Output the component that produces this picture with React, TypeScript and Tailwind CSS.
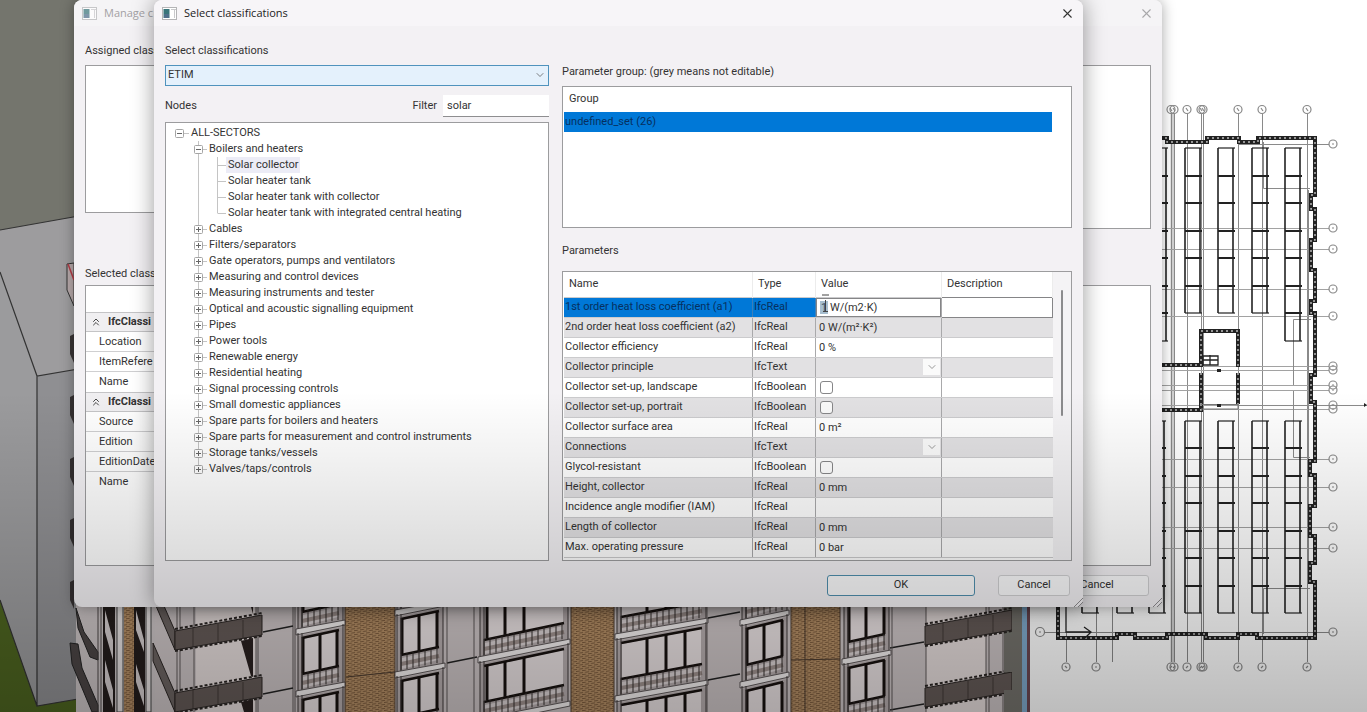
import React, { useState } from 'react';
import { ChevronDown, ChevronsUp, X } from 'lucide-react';

interface TreeNode {
  label: string;
  children?: string[];
}

interface Parameter {
  name: string;
  type: 'IfcReal' | 'IfcText' | 'IfcBoolean';
  value?: string;
}

const nodes: TreeNode[] = [
  {
    label: 'Boilers and heaters',
    children: [
      'Solar collector',
      'Solar heater tank',
      'Solar heater tank with collector',
      'Solar heater tank with integrated central heating'
    ]
  },
  { label: 'Cables' },
  { label: 'Filters/separators' },
  { label: 'Gate operators, pumps and ventilators' },
  { label: 'Measuring and control devices' },
  { label: 'Measuring instruments and tester' },
  { label: 'Optical and acoustic signalling equipment' },
  { label: 'Pipes' },
  { label: 'Power tools' },
  { label: 'Renewable energy' },
  { label: 'Residential heating' },
  { label: 'Signal processing controls' },
  { label: 'Small domestic appliances' },
  { label: 'Spare parts for boilers and heaters' },
  { label: 'Spare parts for measurement and control instruments' },
  { label: 'Storage tanks/vessels' },
  { label: 'Valves/taps/controls' }
];

const parameters: Parameter[] = [
  { name: '1st order heat loss coefficient (a1)', type: 'IfcReal', value: '1 W/(m2·K)' },
  { name: '2nd order heat loss coefficient (a2)', type: 'IfcReal', value: '0 W/(m²·K²)' },
  { name: 'Collector efficiency', type: 'IfcReal', value: '0 %' },
  { name: 'Collector principle', type: 'IfcText' },
  { name: 'Collector set-up, landscape', type: 'IfcBoolean' },
  { name: 'Collector set-up, portrait', type: 'IfcBoolean' },
  { name: 'Collector surface area', type: 'IfcReal', value: '0 m²' },
  { name: 'Connections', type: 'IfcText' },
  { name: 'Glycol-resistant', type: 'IfcBoolean' },
  { name: 'Height, collector', type: 'IfcReal', value: '0 mm' },
  { name: 'Incidence angle modifier (IAM)', type: 'IfcReal', value: '' },
  { name: 'Length of collector', type: 'IfcReal', value: '0 mm' },
  { name: 'Max. operating pressure', type: 'IfcReal', value: '0 bar' }
];

const propertyGroups = [
  { title: 'IfcClassi', rows: ['Location', 'ItemRefere', 'Name'] },
  { title: 'IfcClassi', rows: ['Source', 'Edition', 'EditionDate', 'Name'] }
];

// Floor plan geometry
const rackColumns = [1185, 1218, 1252, 1285];
const upperTicks = [148, 176, 203, 231, 258, 286, 313];
const lowerTicks = [421, 448, 476, 503, 531, 558, 586, 613];
const axesX = [1171, 1174, 1187, 1201, 1203, 1238, 1262, 1307];
const axesY = [228, 249, 289, 316, 366, 370, 385, 390, 405, 409, 459, 487, 527, 548];
const outerWall =
  'M1160 138H1167V142H1207V138H1239V142H1258V138H1315V195H1311V209H1315V240H1311V270H1315V301H1311V313H1315V375H1311V402H1315V461H1310V475H1315V506H1310V536H1315V563H1310V582H1315V638H1257V634H1238V638H1206V634H1167V638H1135V634H1117V638H1058V600';
const coreWalls = 'M1160 365H1201V331H1238V367M1201 373V404M1238 373V404M1160 410H1201V404';

function Wall({ d }: { d: string }) {
  return (
    <g fill="none">
      <path d={d} stroke="#222" strokeWidth="4" />
      <path d={d} stroke="#bdbdbd" strokeWidth="1.4" strokeDasharray="2 3" />
    </g>
  );
}

function Rack({ x, ticks }: { x: number; ticks: number[] }) {
  const top = ticks[0];
  const bottom = ticks[ticks.length - 1];
  return (
    <g stroke="#222" fill="none">
      <path d={`M${x} ${top}V${bottom}M${x + 15} ${top}V${bottom}`} strokeWidth="1.6" />
      {ticks.map((y) => (
        <path key={y} d={`M${x} ${y}H${x + 17}`} strokeWidth={y === top || y === bottom ? 1.2 : 2} />
      ))}
    </g>
  );
}

function FloorPlan() {
  return (
    <g>
      <rect x="1030" width="337" height="712" fill="#fff" />
      <path d="M1172.500 114V662" stroke="#d2d2d2" strokeWidth="4" />
      <g stroke="#8a8a8a" strokeWidth="1" fill="none">
        {axesX.map((x) => (
          <path key={x} d={`M${x}.5 114V662`} />
        ))}
        {axesY.map((y) => (
          <path key={y} d={`M1160 ${y}.5H1329`} stroke="#a2a2a2" />
        ))}
        <path d="M1239 144.5H1329M1044 632.5H1329M1066.5 632V662M1096.5 607V662M1112.5 607V662M1238 405.500H1367" />
        <path d="M1263.500 142V188.500H1310M1311 319.500H1293.500V385M1293.500 391V457.500H1310M1263.500 634V588.500H1310M1308.500 190V580" />
      </g>
      <g stroke="#888" strokeWidth="1.2" fill="none">
        {axesX.map((x) => (
          <g key={x}>
            <circle cx={x} cy="109.500" r="4" />
            <circle cx={x} cy="667" r="4" />
            <path d={`M${x - 1} 108l2 3M${x - 1} 668l2-2`} />
          </g>
        ))}
        {[144, ...axesY, 632].map((y) => (
          <g key={y}>
            <circle cx="1333" cy={y} r="4" />
            <path d={`M1332 ${y}h2`} />
          </g>
        ))}
        <circle cx="1040" cy="632" r="4.500" />
        <circle cx="1066" cy="667" r="4" />
        <circle cx="1096" cy="667" r="4" />
        <path d="M1039 632h2M1065 666l2 2M1095 667h2" />
      </g>
      <Rack x={1151} ticks={[...upperTicks, 341]} />
      <Rack x={1149} ticks={lowerTicks} />
      {rackColumns.map((x) => (
        <g key={x}>
          <Rack x={x} ticks={x === 1285 ? [...upperTicks, 341] : upperTicks} />
          <Rack x={x} ticks={lowerTicks} />
        </g>
      ))}
      <Rack x={1082} ticks={[586, 613]} />
      <Rack x={1117} ticks={[586, 613]} />
      <Wall d={outerWall} />
      <Wall d={coreWalls} />
      <path d="M1203 356H1218V365H1203ZM1203 360H1218M1210 355V365M1066 606V632H1090M1084 627L1091 632L1085 638" fill="none" stroke="#222" strokeWidth="1.3" />
      <path d="M1201 404.500H1238V409H1201" fill="none" stroke="#777" />
      <path d="M1217 369h4v3h-4zM1217 404h4v3h-4zM1364 403l3 2-3 2z" fill="#222" />
    </g>
  );
}

interface BayProps {
  x: number;
  y: number;
  w: number;
  slope: number;
  bars: number[];
  glass?: number;
}

// One storey of a window bay, drawn from the floor slab under it upwards
function Bay({ x, y, w, slope, bars, glass = 36 }: BayProps) {
  const r = y - slope;
  const posts = Array.from({ length: Math.floor(w / 6) }, (_, i) => i * 6 + 4);
  return (
    <g>
      <path d={`M${x} ${y - 55}L${x + w} ${r - 55}V${r}L${x} ${y}Z`} fill="#b5acad" />
      <path d={`M${x + 5} ${y - 52}L${x + w - 5} ${r - 51}V${r - 16}L${x + 5} ${y - 16}Z`} fill="#e8e0e1" />
      <path d={`M${x + 5} ${y - 14}L${x + w - 5} ${r - 13}V${r - 3}L${x + 5} ${y - 3}Z`} fill="#d9d1d2" />
      {bars.map((b) => (
        <path key={b} d={`M${x + b} ${y - 53 - (slope * b) / w}v${glass}`} stroke="#17110f" strokeWidth="3" />
      ))}
      <path d={`M${x + 4} ${y - 53}L${x + w - 4} ${r - 52}M${x + 4} ${y - 17}L${x + w - 4} ${r - 16}`} stroke="#17110f" strokeWidth="2.500" />
      <path d={`M${x + 4} ${y - 8}L${x + w - 4} ${r - 7}`} stroke="#65534c" strokeWidth="4" opacity=".5" />
      {posts.map((p) => (
        <path key={p} d={`M${x + p} ${y - 17 - (slope * p) / w}v16`} stroke="#332c2b" />
      ))}
      <path d={`M${x} ${y - 58}V${y}M${x + w} ${r - 58}V${r}M${x + 4} ${y - 58}V${y}`} stroke="#3c3637" />
      <path d={`M${x - 2} ${y}L${x + w + 2} ${r}v5L${x - 2} ${y + 6}Z`} fill="#f2eeee" stroke="#3c3637" strokeWidth=".8" />
    </g>
  );
}

function Balcony({ x, y, flip }: { x: number; y: number; flip?: boolean }) {
  return (
    <g stroke="#2a2523" strokeWidth="1">
      {!flip && <path d={`M${x - 22} ${y - 50}L${x} ${y}V${y + 19}L${x - 22} ${y - 32}Z`} fill="#6b6361" />}
      <path d={`M${x} ${y}l87-16v20l-87 15z`} fill="#645a57" />
      <path d={`M${x + 18} ${y - 3}v19M${x + 43} ${y - 7}v19M${x + 68} ${y - 11}v19`} opacity=".6" />
      <path d={`M${x} ${y - 2}l87-16M${x} ${y + 20}l87-15`} strokeWidth="2" strokeDasharray="3 2" />
    </g>
  );
}

function Building() {
  return (
    <g>
      <rect width="1030" height="712" fill="#74756d" />
      <path d="M0 230L90 214V712H0Z" fill="#9d9c9e" />
      <path d="M0 272L37 376V706L0 600Z" fill="#9b9b9d" />
      <path d="M37 376L90 367V712H37Z" fill="#8f8f92" />
      <path d="M0 600L37 706L90 697V712H0Z" fill="#4d6420" />
      <path d="M0 230L90 214M0 272L37 376L90 367M37 376V706L78 699M0 600L37 706" fill="none" stroke="#333" strokeWidth="1.200" />
      <path d="M74 263L67 264V290L74 306Z" fill="#b7a9aa" stroke="#333" />
      <path d="M68 264L74 280" stroke="#b33a45" strokeWidth="1.500" />
      {[336, 397, 459, 520, 582].map((y) => (
        <path key={y} d={`M74 ${y - 2}L70 ${y}V${y + 18}L74 ${y + 27}Z`} fill="#3a3536" />
      ))}

      {/* Narrow side elevation */}
      <path d="M76 600H160V712H76Z" fill="#c9c2c3" />
      <path d="M103 600H115V712H103ZM134 600H145V712H134Z" fill="#241d1c" />
      <path d="M105 610L113 640V660L105 632ZM105 660L113 690V708L105 682ZM136 610L144 640V652L136 630ZM136 664L144 690V706L136 682Z" fill="#d2cbcc" />
      <path d="M124 600H134V712H124Z" fill="url(#brick)" />
      <path d="M117 600H123V712H117ZM146 600H151V712H146Z" fill="#e2dddd" stroke="#444" />
      <path d="M76 608L84 632L98 652V660L90 657L78 628ZM70 643L78 644L82 668L98 705V712H92L72 664Z" fill="#4b4545" stroke="#222" />
      <path d="M98 600V712M101 600V712M156 600V712" stroke="#4b4545" />

      {/* Main elevation */}
      <path d="M155 600H1004V712H155Z" fill="#cbc3c4" />
      <path d="M196 600H256V712H196ZM926 600H986V712H926Z" fill="#e4dbda" />
      <path d="M177 600V712M180 600V712M194 600V712M256 600V712M258 600V712M293 600V712M295 600V712" stroke="#5c5657" />
      <path d="M241 641L253 638V677L251 676ZM241 702L253 699V712H244ZM249 600H253V614Z" fill="#2a2120" />
      <Balcony x={175} y={631} />
      <Balcony x={175} y={693} />
      <path d="M345 600H395V712H345ZM571 600H614V712H571ZM791 600H840V712H791Z" fill="url(#brick)" />
      <path d="M345 600V712M395 600V712M571 600V712M614 600V712M791 600V712M840 600V712M805 600V712M346 677L395 672M791 660L840 659" stroke="#4a3a2e" />
      {[629, 691, 753].map((y) => (
        <g key={y}>
          <Bay x={298} y={y} w={45} slope={9} bars={[5, 22, 39]} />
          <Bay x={397} y={y - 19} w={46} slope={9} bars={[5, 22, 40]} />
          <Bay x={480} y={y - 34} w={88} slope={18} bars={[7, 25, 44]} />
          <Bay x={617} y={y + 5} w={89} slope={16} bars={[30, 49, 68]} />
          <Bay x={742} y={y - 9} w={45} slope={10} bars={[5, 22, 40]} />
          <Bay x={844} y={y - 32} w={45} slope={9} bars={[5, 22, 40]} />
          <path d={`M263 ${y + 3}l30-6M447 ${y - 28}l30-6M708 ${y - 11}l32-6M890 ${y - 43}l34-6`} stroke="#222" strokeWidth="1.500" />
        </g>
      ))}
      <path d="M447 600V712M474 600V712M707 600V712M892 600V712M926 600V712M986 600V712M989 600V712M1003 600V712" stroke="#5c5657" />
      <Balcony x={925} y={626} flip />
      <Balcony x={925} y={688} flip />
      <path d="M1012 600H1022V712H1004V690H1012ZM1004 634H1012V672H1004Z" fill="#74726c" />
      <path d="M1022 600H1027V712H1022Z" fill="#7fa9cb" />
      <path d="M1027 600H1030V712H1027Z" fill="#6b4650" />
    </g>
  );
}

function Backdrop() {
  return (
    <svg className="absolute inset-0 h-full w-full" viewBox="0 0 1367 712" preserveAspectRatio="xMinYMin slice" aria-hidden="true">
      <defs>
        <pattern id="brick" width="6" height="4" patternUnits="userSpaceOnUse" patternTransform="skewY(-8)">
          <rect width="6" height="4" fill="#b48e65" />
          <path d="M0 .5H4M3 2.500H6M0 2.500H1" stroke="#7a5a3c" strokeWidth="1" />
        </pattern>
      </defs>
      <Building />
      <FloorPlan />
    </svg>
  );
}

function TitleBar({ title, inactive }: { title: string; inactive?: boolean }) {
  return (
    <div className={`flex h-[26px] items-center justify-between rounded-t-lg px-2 ${inactive ? 'bg-[#f5f4f6]' : 'bg-[#f7f5f8]'}`}>
      <div className="flex items-center gap-[7px]">
        <svg width="15" height="13" viewBox="0 0 15 13" className={inactive ? 'opacity-70' : ''} aria-hidden="true">
          <rect x=".5" y=".5" width="14" height="12" fill="#fff" stroke="#b4b4b6" />
          <rect x="1.500" y="2" width="6" height="9" fill="#38757a" />
          <rect x="2" y="7" width="5" height="4" fill="#4e6f8a" />
          <path d="M9 2.500h5M12.500 2v9" stroke="#c9c9cc" />
        </svg>
        <span className={`font-['Open_Sans','Noto_Sans',sans-serif] text-[11px] leading-4 whitespace-nowrap ${inactive ? 'text-[#a3a1a4]' : 'text-[#222]'}`}>{title}</span>
      </div>
      <button aria-label="Close" className={inactive ? 'text-[#a8a8aa]' : 'text-[#333]'}>
        <X size={15} strokeWidth={1.8} />
      </button>
    </div>
  );
}

function Grip() {
  return (
    <svg className="absolute right-0 bottom-0" width="9" height="9" viewBox="0 0 9 9" aria-hidden="true">
      <path d="M0 9L9 0M4 9L9 4" stroke="#8d8b8e" strokeWidth="1" />
    </svg>
  );
}

function Expander({ open }: { open?: boolean }) {
  return (
    <svg width="9" height="9" viewBox="0 0 9 9" aria-hidden="true">
      <rect x=".5" y=".5" width="8" height="8" rx="1" fill="#fff" stroke="#a5a5a5" />
      <path d={open ? 'M2 4.500H7' : 'M2 4.500H7M4.500 2V7'} stroke="#666" />
    </svg>
  );
}

function NodeTree({ selected, onSelect }: { selected: string; onSelect: (label: string) => void }) {
  const [open, setOpen] = useState(true);

  return (
    <ul className="flex-1 border border-[#9c9c9e] bg-white pt-[2px] pl-[9px]">
      <li className="flex h-4 items-center">
        <Expander open />
        <span className="h-px w-[5px] bg-[#c4c4c4]" />
        <span className="pl-[2px]">ALL-SECTORS</span>
      </li>
      {nodes.map((node, i) => (
        <React.Fragment key={node.label}>
          <li className="flex h-4 items-center pl-[19px]">
            <button
              aria-label={`Expand ${node.label}`}
              onClick={() => node.children && setOpen(!open)}
              className="flex h-4 w-[9px] flex-col items-center"
            >
              <span className="w-px flex-1 bg-[#c4c4c4]" />
              <Expander open={!!node.children && open} />
              <span className={`w-px flex-1 ${i < nodes.length - 1 ? 'bg-[#c4c4c4]' : ''}`} />
            </button>
            <span className="h-px w-1 bg-[#c4c4c4]" />
            <span className="pl-[2px] whitespace-nowrap">{node.label}</span>
          </li>
          {open && node.children?.map((child, c) => (
            <li key={child} className="flex h-4 items-center pl-[23px]">
              <svg width="28" height="16" viewBox="0 0 28 16" stroke="#c4c4c4" aria-hidden="true">
                <path d={`M.5 0V16M19.500 0V${c === node.children!.length - 1 ? 8 : 16}M19.500 8.500H28`} fill="none" />
              </svg>
              <button
                onClick={() => onSelect(child)}
                className={`h-4 px-[2px] leading-4 whitespace-nowrap ${selected === child ? 'bg-[#ececf6]' : ''}`}
              >
                {child}
              </button>
            </li>
          ))}
        </React.Fragment>
      ))}
    </ul>
  );
}

function ValueCell({ parameter, active }: { parameter: Parameter; active: boolean }) {
  if (parameter.type === 'IfcBoolean') {
    return (
      <input
        type="checkbox"
        aria-label={parameter.name}
        className="mx-1 block size-[13px] appearance-none rounded-[3px] border border-[#868688] bg-white/80 checked:bg-[#0078d7]"
      />
    );
  }
  if (parameter.type === 'IfcText') {
    return (
      <div className="relative h-[18px]">
        <select aria-label={parameter.name} className="h-full w-full appearance-none bg-transparent px-1">
          <option></option>
        </select>
        <span className="pointer-events-none absolute top-px right-px flex h-4 w-[17px] items-center justify-center bg-[#fafafa] text-[#777]">
          <ChevronDown size={12} strokeWidth={1.5} />
        </span>
      </div>
    );
  }
  return (
    <div className="relative">
      <input
        aria-label={parameter.name}
        defaultValue={parameter.value}
        className={`block h-[19px] w-full pr-1 outline-none ${active ? 'border border-[#858587] bg-white pl-1' : 'bg-transparent pl-[3px]'}`}
      />
      {active && (
        <>
          <span className="absolute top-[3px] left-1 h-[13px] w-[8px] bg-[#3c6f94]/45" />
          <svg className="absolute -top-1 left-[5px]" width="9" height="20" viewBox="0 0 9 20" aria-hidden="true">
            <path d="M1 1H8M4.500 6V17M2 17.500H7" stroke="#444" fill="none" />
          </svg>
        </>
      )}
    </div>
  );
}

function ParameterTable() {
  return (
    <div className="flex h-[290px] overflow-hidden border border-[#9c9c9e] bg-white">
      <table className="ml-px h-min flex-1 table-fixed border-collapse text-left">
        <colgroup>
          <col />
          <col className="w-[63px]" />
          <col className="w-[126px]" />
          <col className="w-[111px]" />
        </colgroup>
        <thead>
          <tr className="h-[25px]">
            {['Name', 'Type', 'Value', 'Description'].map((head) => (
              <th key={head} className="border-r border-[#ececec] px-[5px] font-normal">{head}</th>
            ))}
          </tr>
        </thead>
        <tbody>
          {parameters.map((p, i) => {
            const cell = i === 0 ? 'bg-[#0078d7] text-[#06305f] border-[#3c7fb8]' : 'border-[#a9a9ab]';
            return (
              <tr key={p.name} className={`h-5 ${i % 2 ? 'bg-[#e2e1e3]' : 'bg-white'}`}>
                <td className={`overflow-hidden border-y border-r border-y-[#cbcbcd] py-0 pl-px whitespace-nowrap ${cell}`}>{p.name}</td>
                <td className={`border-y border-r border-y-[#cbcbcd] py-0 pl-px ${cell}`}>{p.type}</td>
                <td className="border-y border-r border-[#a9a9ab] border-y-[#cbcbcd] p-0">
                  <ValueCell parameter={p} active={i === 0} />
                </td>
                <td className={i === 0 ? 'border border-[#858587]' : 'border-y border-[#cbcbcd]'}></td>
              </tr>
            );
          })}
        </tbody>
      </table>
      <div className="flex w-[18px] justify-center bg-[#f4f3f5] pt-[18px]">
        <div className="h-[126px] w-[2px] rounded-full bg-[#8b8b8d]" />
      </div>
    </div>
  );
}

function SelectDialog() {
  const [filter, setFilter] = useState('solar');
  const [selected, setSelected] = useState('Solar collector');

  return (
    <section className="absolute top-0 right-[284px] left-[154px] rounded-lg bg-[#f3f1f4] shadow-[0_0_22px_rgba(0,0,0,0.4)]">
      <TitleBar title="Select classifications" />
      <div className="grid grid-cols-[384fr_510fr] gap-[13px] px-[11px] pt-[17px]">
        <div className="flex min-w-0 flex-col">
          <label htmlFor="system" className="leading-4">Select classifications</label>
          <div className="relative mt-[6px]">
            <select id="system" className="block h-[21px] w-full appearance-none border border-[#4f93bd] bg-[#e4f1fc] px-[2px]">
              <option>ETIM</option>
            </select>
            <ChevronDown size={12} strokeWidth={1.5} className="pointer-events-none absolute top-1 right-[3px] text-[#555]" />
          </div>
          <div className="mt-[9px] mb-[5px] flex h-[22px] items-center">
            <span className="flex-1">Nodes</span>
            <label htmlFor="filter" className="pr-[6px]">Filter</label>
            <input
              id="filter"
              value={filter}
              onChange={(e) => setFilter(e.target.value)}
              className="h-[22px] w-[106px] border-b border-[#8e8e90] bg-white px-1 outline-none"
            />
          </div>
          <NodeTree selected={selected} onSelect={setSelected} />
        </div>

        <div className="flex min-w-0 flex-col pt-[21px]">
          <div className="leading-4">Parameter group: (grey means not editable)</div>
          <div className="mt-[6px] h-[142px] border border-[#9c9c9e] bg-white pr-[19px] pl-px">
            <table className="w-full border-collapse text-left">
              <thead>
                <tr className="h-[25px]">
                  <th className="px-[5px] font-normal">Group</th>
                </tr>
              </thead>
              <tbody>
                <tr className="h-5 bg-[#0078d7] text-[#06305f]">
                  <td className="py-0 pl-px">undefined_set (26)</td>
                </tr>
              </tbody>
            </table>
          </div>
          <div className="mt-[15px] mb-3 leading-4">Parameters</div>
          <ParameterTable />
        </div>
      </div>
      <div className="flex justify-end gap-[23px] pt-[14px] pr-[13px] pb-[11px]">
        <button className="h-[21px] w-[148px] rounded-[3px] border border-[#4f8fae] bg-[#fbfbfc]">OK</button>
        <button className="h-[21px] w-[72px] rounded-[3px] border border-[#d0d0d2] bg-[#fbfbfc]">Cancel</button>
      </div>
      <Grip />
    </section>
  );
}

function ManageDialog() {
  return (
    <section className="absolute top-0 right-[205px] left-[74px] rounded-lg bg-[#f3f1f4] shadow-[0_0_14px_rgba(0,0,0,0.35)]">
      <TitleBar title="Manage c" inactive />
      <div className="grid grid-cols-2 gap-3 px-[11px] pt-[17px]">
        <div>
          <div className="leading-4">Assigned class</div>
          <div className="mt-[6px] h-[148px] border border-[#9c9c9e] bg-white" />
          <div className="mt-[53px] mb-[3px] leading-4">Selected classi</div>
          <div className="h-[281px] border border-[#9c9c9e] bg-white">
            <div className="h-[26px]" />
            {propertyGroups.map((group, i) => (
              <div key={i}>
                <div className="flex h-5 items-center gap-[6px] border-y border-[#c4c4c6] bg-[#f0eff1] pl-1 font-bold">
                  <ChevronsUp size={12} strokeWidth={1.8} />
                  {group.title}
                </div>
                {group.rows.map((row) => (
                  <div key={row} className="h-5 border-b border-[#cfcfd1] pl-[13px] leading-5 last:border-b-0">{row}</div>
                ))}
              </div>
            ))}
          </div>
        </div>
        <div className="pt-[22px]">
          <div className="h-[164px] border border-[#9c9c9e] bg-white" />
          <div className="mt-14 h-[281px] border border-[#9c9c9e] bg-white" />
        </div>
      </div>
      <div className="flex justify-end pt-[9px] pr-[13px] pb-[11px]">
        <button className="h-[21px] w-[104px] rounded-[3px] border border-[#d0d0d2] bg-[#fbfbfc]">Cancel</button>
      </div>
      <Grip />
    </section>
  );
}

export default function App() {
  return (
    <main className="relative h-screen overflow-hidden bg-white font-[Roboto,'DejaVu_Sans_Condensed',sans-serif] text-[11px] text-[#333]">
      <Backdrop />
      <ManageDialog />
      <SelectDialog />
      {/* Shade that falls over the lower part of the screen */}
      <div className="pointer-events-none absolute inset-0 bg-linear-to-b from-transparent from-55% to-black/26" />
    </main>
  );
}
